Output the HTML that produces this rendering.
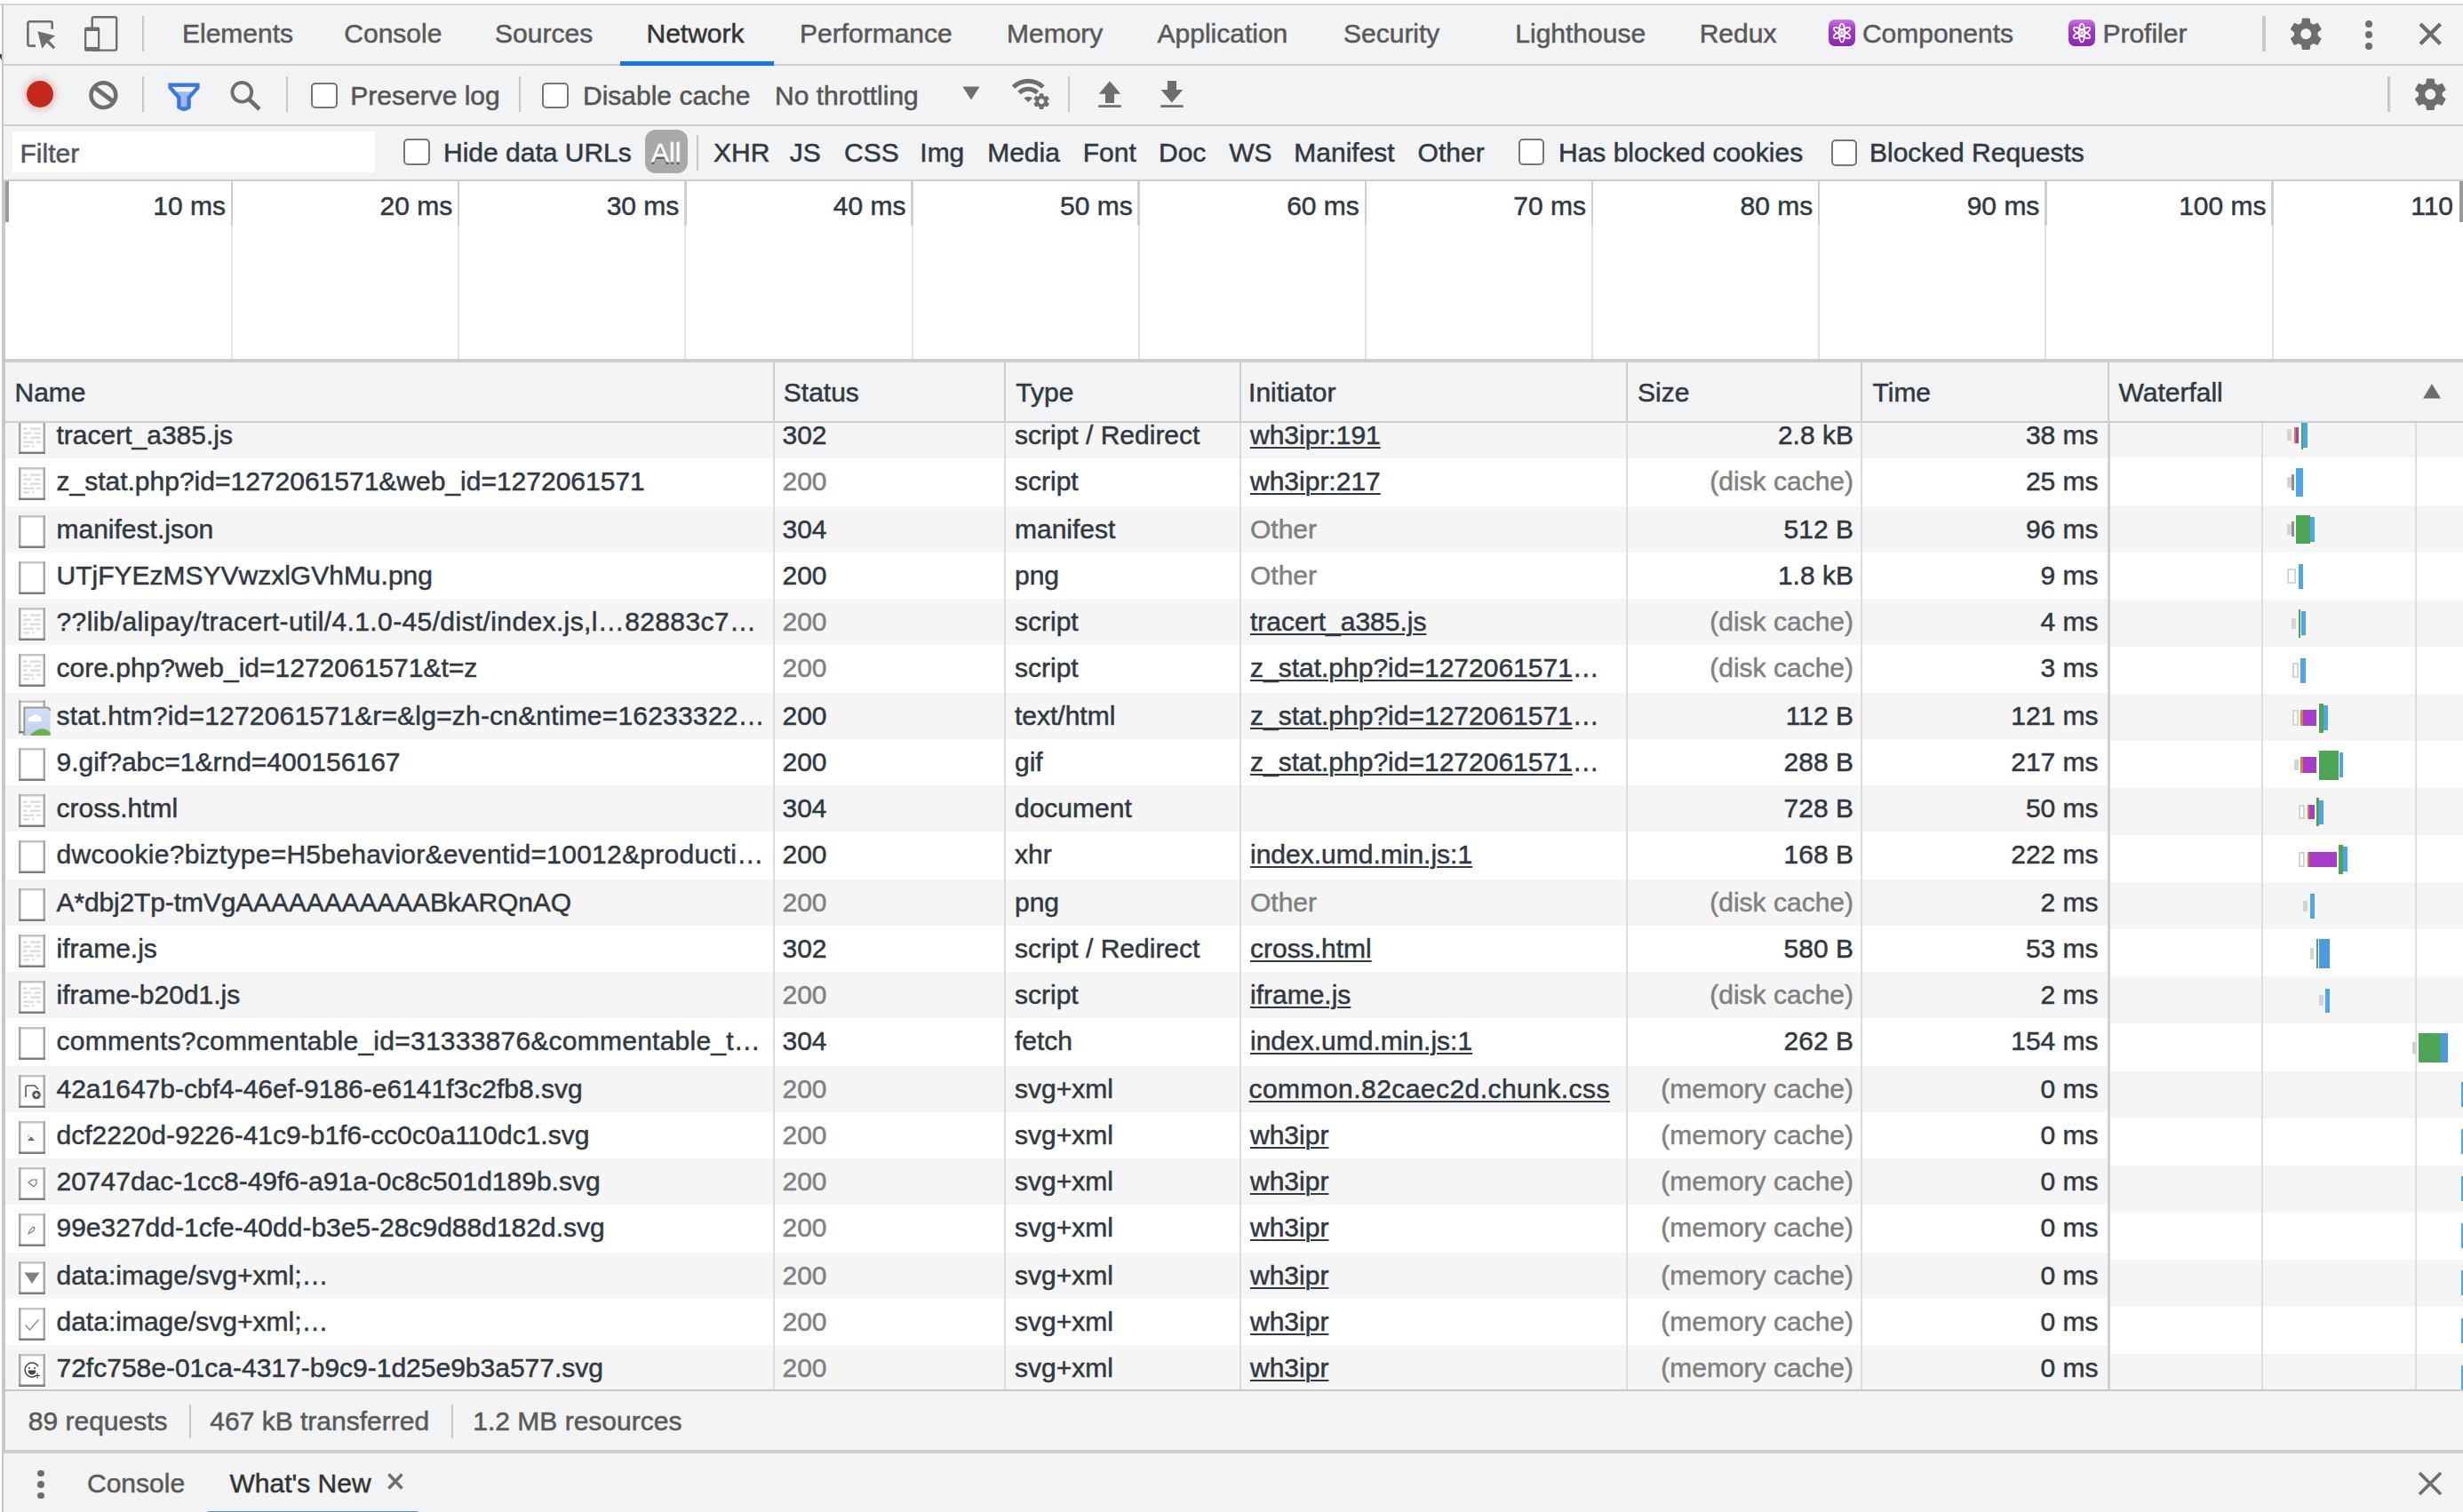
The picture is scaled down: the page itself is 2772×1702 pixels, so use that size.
<!DOCTYPE html>
<html><head><meta charset="utf-8"><style>
html,body{margin:0;padding:0;width:2772px;height:1702px;overflow:hidden;background:#fff;font-family:'Liberation Sans', sans-serif;-webkit-text-stroke:0.5px currentColor}
.t{position:absolute;line-height:40px;font-size:30px;white-space:pre;color:#303942}
div{box-sizing:content-box}
u{text-decoration:underline;text-decoration-thickness:2px;text-underline-offset:3px}
</style></head><body>
<div style="position:absolute;left:0;top:0;width:2772px;height:1702px;background:#fff"></div>
<div style="position:absolute;left:4px;top:6px;width:2768px;height:1696px;background:#f1f3f4;"></div>
<div style="position:absolute;left:0px;top:4px;width:2772px;height:2px;background:#d4d5d9;"></div>
<div style="position:absolute;left:2px;top:6px;width:1.9px;height:1696px;background:#c5c6cb;"></div>
<div style="position:absolute;left:4px;top:72px;width:2768px;height:1.5px;background:#cacdd1;"></div>
<svg style="position:absolute;left:28px;top:18px;" width="40" height="42" viewBox="0 0 40 42"><path d="M12 33.6 H5.4 a2 2 0 0 1 -2 -2 V8.3 a2 2 0 0 1 2 -2 H28.7 a2 2 0 0 1 2 2 V14.7" fill="none" stroke="#6e6e6e" stroke-width="2.6"/><path d="M14.4 17.3 L34.2 22.2 L27.1 27.4 L34.2 35.2 L32 37.2 L24.5 30 L19.3 36.8 Z" fill="#6e6e6e"/></svg>
<svg style="position:absolute;left:92px;top:16px;" width="44" height="44" viewBox="0 0 44 44"><rect x="11.7" y="3.3" width="27.5" height="37.3" rx="2" fill="none" stroke="#6e6e6e" stroke-width="2.4"/><rect x="3" y="14.5" width="17.3" height="27.3" rx="2.2" fill="#6e6e6e"/><rect x="5.3" y="19" width="12.7" height="17.9" fill="#f1f3f4"/></svg>
<div style="position:absolute;left:160px;top:18px;width:2px;height:40px;background:#c8c8c8;"></div>
<div style="position:absolute;left:205.0px;top:17.60px;line-height:40px;font-size:30px;color:#595959;white-space:pre;">Elements</div>
<div style="position:absolute;left:387.3px;top:17.60px;line-height:40px;font-size:30px;color:#595959;white-space:pre;">Console</div>
<div style="position:absolute;left:557.1px;top:17.60px;line-height:40px;font-size:30px;color:#595959;white-space:pre;">Sources</div>
<div style="position:absolute;left:727.5px;top:17.60px;line-height:40px;font-size:30px;color:#333333;white-space:pre;">Network</div>
<div style="position:absolute;left:900.0px;top:17.60px;line-height:40px;font-size:30px;color:#595959;white-space:pre;">Performance</div>
<div style="position:absolute;left:1133.0px;top:17.60px;line-height:40px;font-size:30px;color:#595959;white-space:pre;">Memory</div>
<div style="position:absolute;left:1302.5px;top:17.60px;line-height:40px;font-size:30px;color:#595959;white-space:pre;">Application</div>
<div style="position:absolute;left:1512.0px;top:17.60px;line-height:40px;font-size:30px;color:#595959;white-space:pre;">Security</div>
<div style="position:absolute;left:1705.3px;top:17.60px;line-height:40px;font-size:30px;color:#595959;white-space:pre;">Lighthouse</div>
<div style="position:absolute;left:1912.7px;top:17.60px;line-height:40px;font-size:30px;color:#595959;white-space:pre;">Redux</div>
<div style="position:absolute;left:2095.8999999999996px;top:17.60px;line-height:40px;font-size:30px;color:#595959;white-space:pre;">Components</div>
<div style="position:absolute;left:2366.3999999999996px;top:17.60px;line-height:40px;font-size:30px;color:#595959;white-space:pre;">Profiler</div>
<div style="position:absolute;left:698px;top:68.5px;width:173px;height:5px;background:#1a73e8;"></div>
<svg style="position:absolute;left:2058px;top:22px;" width="30" height="30" viewBox="0 0 30 30"><defs><linearGradient id="rg2058" x1="0" y1="0" x2="0" y2="1"><stop offset="0" stop-color="#c877e0"/><stop offset="0.35" stop-color="#a43bcc"/><stop offset="1" stop-color="#8c2aad"/></linearGradient></defs><rect x="0" y="0" width="30" height="30" rx="7" fill="url(#rg2058)"/><g fill="none" stroke="#fff" stroke-width="1.6"><ellipse cx="15" cy="15" rx="3.2" ry="10.5"/><ellipse cx="15" cy="15" rx="3.2" ry="10.5" transform="rotate(60 15 15)"/><ellipse cx="15" cy="15" rx="3.2" ry="10.5" transform="rotate(-60 15 15)"/></g><circle cx="15" cy="15" r="1.8" fill="#fff"/></svg>
<svg style="position:absolute;left:2328px;top:22px;" width="30" height="30" viewBox="0 0 30 30"><defs><linearGradient id="rg2328" x1="0" y1="0" x2="0" y2="1"><stop offset="0" stop-color="#c877e0"/><stop offset="0.35" stop-color="#a43bcc"/><stop offset="1" stop-color="#8c2aad"/></linearGradient></defs><rect x="0" y="0" width="30" height="30" rx="7" fill="url(#rg2328)"/><g fill="none" stroke="#fff" stroke-width="1.6"><ellipse cx="15" cy="15" rx="3.2" ry="10.5"/><ellipse cx="15" cy="15" rx="3.2" ry="10.5" transform="rotate(60 15 15)"/><ellipse cx="15" cy="15" rx="3.2" ry="10.5" transform="rotate(-60 15 15)"/></g><circle cx="15" cy="15" r="1.8" fill="#fff"/></svg>
<div style="position:absolute;left:2546px;top:18px;width:3.5px;height:40px;background:#c8c8c8;"></div>
<svg style="position:absolute;left:2572.71px;top:15.81px" width="44.58" height="44.58" viewBox="0 0 24 24"><path d="M19.14 12.94c.04-.3.06-.61.06-.94 0-.32-.02-.64-.07-.94l2.03-1.58c.18-.14.23-.41.12-.61l-1.92-3.32c-.12-.22-.37-.29-.59-.22l-2.39.96c-.5-.38-1.03-.7-1.62-.94L14.4 2.81c-.04-.24-.24-.41-.48-.41h-3.84c-.24 0-.43.17-.47.41L9.25 5.35c-.59.24-1.13.57-1.62.94l-2.39-.96c-.22-.08-.47 0-.59.22L2.74 8.87c-.12.21-.08.47.12.61l2.03 1.58c-.05.3-.09.63-.09.94s.02.64.07.94l-2.03 1.58c-.18.14-.23.41-.12.61l1.92 3.32c.12.22.37.29.59.22l2.39-.96c.5.38 1.03.7 1.62.94l.36 2.54c.05.24.24.41.48.41h3.84c.24 0 .44-.17.47-.41l.36-2.54c.59-.24 1.13-.56 1.62-.94l2.39.96c.22.08.47 0 .59-.22l1.92-3.32c.12-.22.07-.47-.12-.61l-2.01-1.58zM12 15.2c-1.77 0-3.2-1.43-3.2-3.2s1.43-3.2 3.2-3.2 3.2 1.43 3.2 3.2-1.43 3.2-3.2 3.2z" fill="#6e6e6e"/></svg>
<div style="position:absolute;left:2662px;top:23px;width:8px;height:8px;border-radius:50%;background:#6e6e6e"></div>
<div style="position:absolute;left:2662px;top:35.3px;width:8px;height:8px;border-radius:50%;background:#6e6e6e"></div>
<div style="position:absolute;left:2662px;top:47.8px;width:8px;height:8px;border-radius:50%;background:#6e6e6e"></div>
<svg style="position:absolute;left:2720px;top:23px;" width="30" height="30" viewBox="0 0 30 30"><path d="M4 4 L26.5 26.5 M26.5 4 L4 26.5" stroke="#6e6e6e" stroke-width="4.4"/></svg>
<div style="position:absolute;left:4px;top:140px;width:2768px;height:1.5px;background:#cacdd1;"></div>
<div style="position:absolute;left:30px;top:90.75px;width:30px;height:30px;border-radius:50%;background:#c5291c;box-shadow:0 0 6px 4px rgba(225,90,90,0.28)"></div>
<svg style="position:absolute;left:98px;top:89px;" width="38" height="38" viewBox="0 0 38 38"><circle cx="18.4" cy="18.1" r="13.9" fill="none" stroke="#6e6e6e" stroke-width="4.6"/><path d="M8.5 9.5 L28.3 24.5" stroke="#6e6e6e" stroke-width="5"/></svg>
<div style="position:absolute;left:160px;top:86px;width:2px;height:40px;background:#c8c8c8;"></div>
<svg style="position:absolute;left:186px;top:90px;" width="42" height="38" viewBox="0 0 42 38"><path d="M5.6 5.6 H36.4 V8.6 L26.6 19.8 V30.5 Q21 34.8 15.4 30.5 V19.8 L5.6 8.6 Z" fill="#9ebaee" stroke="#3b78e6" stroke-width="4.4" stroke-linejoin="miter"/><path d="M8 8 H34 L29.6 13.3 H12.4 Z" fill="#f1f3f4"/></svg>
<svg style="position:absolute;left:256px;top:87px;" width="42" height="42" viewBox="0 0 42 42"><circle cx="16.3" cy="16.7" r="10.9" fill="none" stroke="#6e6e6e" stroke-width="3.8"/><path d="M24.5 25 L36 36" stroke="#6e6e6e" stroke-width="4.5"/></svg>
<div style="position:absolute;left:322px;top:86px;width:2px;height:40px;background:#c8c8c8;"></div>
<div style="position:absolute;left:350px;top:92.5px;width:25.5px;height:25.5px;border:2px solid #767676;border-radius:5px;background:#fff"></div>
<div style="position:absolute;left:394.3px;top:87.60px;line-height:40px;font-size:30px;color:#555555;white-space:pre;">Preserve log</div>
<div style="position:absolute;left:584px;top:86px;width:2px;height:40px;background:#c8c8c8;"></div>
<div style="position:absolute;left:610px;top:92.5px;width:25.5px;height:25.5px;border:2px solid #767676;border-radius:5px;background:#fff"></div>
<div style="position:absolute;left:656px;top:87.60px;line-height:40px;font-size:30px;color:#555555;white-space:pre;">Disable cache</div>
<div style="position:absolute;left:872px;top:87.60px;line-height:40px;font-size:30px;color:#555555;white-space:pre;">No throttling</div>
<svg style="position:absolute;left:1080px;top:95px;" width="26" height="22" viewBox="0 0 26 22"><path d="M3.5 2.5 H22.5 L13 17.5 Z" fill="#6e6e6e"/></svg>
<svg style="position:absolute;left:1136px;top:86px;" width="50" height="40" viewBox="0 0 50 40"><path d="M21.2 28.6 L4 11.5 A24.3 24.3 0 0 1 38.4 11.5 Z" fill="none"/><path d="M4.5 12 A24 24 0 0 1 38 12" fill="none" stroke="#6e6e6e" stroke-width="5"/><path d="M11 18.5 A14.5 14.5 0 0 1 31.5 18.5" fill="none" stroke="#6e6e6e" stroke-width="5"/><path d="M16.5 24.5 A7 7 0 0 1 26 24.5 L21.2 29 Z" fill="#6e6e6e"/></svg>
<svg style="position:absolute;left:1161.46px;top:103.46px" width="22.29" height="22.29" viewBox="0 0 24 24"><path d="M19.14 12.94c.04-.3.06-.61.06-.94 0-.32-.02-.64-.07-.94l2.03-1.58c.18-.14.23-.41.12-.61l-1.92-3.32c-.12-.22-.37-.29-.59-.22l-2.39.96c-.5-.38-1.03-.7-1.62-.94L14.4 2.81c-.04-.24-.24-.41-.48-.41h-3.84c-.24 0-.43.17-.47.41L9.25 5.35c-.59.24-1.13.57-1.62.94l-2.39-.96c-.22-.08-.47 0-.59.22L2.74 8.87c-.12.21-.08.47.12.61l2.03 1.58c-.05.3-.09.63-.09.94s.02.64.07.94l-2.03 1.58c-.18.14-.23.41-.12.61l1.92 3.32c.12.22.37.29.59.22l2.39-.96c.5.38 1.03.7 1.62.94l.36 2.54c.05.24.24.41.48.41h3.84c.24 0 .44-.17.47-.41l.36-2.54c.59-.24 1.13-.56 1.62-.94l2.39.96c.22.08.47 0 .59-.22l1.92-3.32c.12-.22.07-.47-.12-.61l-2.01-1.58zM12 15.2c-1.77 0-3.2-1.43-3.2-3.2s1.43-3.2 3.2-3.2 3.2 1.43 3.2 3.2-1.43 3.2-3.2 3.2z" fill="#6e6e6e"/></svg>
<div style="position:absolute;left:1202px;top:86px;width:2px;height:40px;background:#c8c8c8;"></div>
<svg style="position:absolute;left:1234px;top:89px;" width="30" height="34" viewBox="0 0 30 34"><path d="M15 2.2 L27.3 16.8 H20 V26.9 H10 V16.8 H2.7 Z" fill="#6e6e6e"/><rect x="2.2" y="29.2" width="25.6" height="2.7" fill="#6e6e6e"/></svg>
<svg style="position:absolute;left:1304px;top:89px;" width="30" height="34" viewBox="0 0 30 34"><path d="M9.9 1.9 H20 V12 H27.3 L14.9 26.6 L2.6 12 H9.9 Z" fill="#6e6e6e"/><rect x="2.3" y="29.2" width="25.4" height="2.7" fill="#6e6e6e"/></svg>
<div style="position:absolute;left:2687px;top:86px;width:2.5px;height:40px;background:#c8c8c8;"></div>
<svg style="position:absolute;left:2712.91px;top:83.71px" width="44.58" height="44.58" viewBox="0 0 24 24"><path d="M19.14 12.94c.04-.3.06-.61.06-.94 0-.32-.02-.64-.07-.94l2.03-1.58c.18-.14.23-.41.12-.61l-1.92-3.32c-.12-.22-.37-.29-.59-.22l-2.39.96c-.5-.38-1.03-.7-1.62-.94L14.4 2.81c-.04-.24-.24-.41-.48-.41h-3.84c-.24 0-.43.17-.47.41L9.25 5.35c-.59.24-1.13.57-1.62.94l-2.39-.96c-.22-.08-.47 0-.59.22L2.74 8.87c-.12.21-.08.47.12.61l2.03 1.58c-.05.3-.09.63-.09.94s.02.64.07.94l-2.03 1.58c-.18.14-.23.41-.12.61l1.92 3.32c.12.22.37.29.59.22l2.39-.96c.5.38 1.03.7 1.62.94l.36 2.54c.05.24.24.41.48.41h3.84c.24 0 .44-.17.47-.41l.36-2.54c.59-.24 1.13-.56 1.62-.94l2.39.96c.22.08.47 0 .59-.22l1.92-3.32c.12-.22.07-.47-.12-.61l-2.01-1.58zM12 15.2c-1.77 0-3.2-1.43-3.2-3.2s1.43-3.2 3.2-3.2 3.2 1.43 3.2 3.2-1.43 3.2-3.2 3.2z" fill="#6e6e6e"/></svg>
<div style="position:absolute;left:4px;top:202px;width:2768px;height:2px;background:#cacdd1;"></div>
<div style="position:absolute;left:14px;top:148px;width:408px;height:45.5px;background:#fff;"></div>
<div style="position:absolute;left:22.5px;top:152.60px;line-height:40px;font-size:30px;color:#50565c;white-space:pre;">Filter</div>
<div style="position:absolute;left:454.2px;top:156.4px;width:25.5px;height:25.5px;border:2px solid #767676;border-radius:5px;background:#fff"></div>
<div style="position:absolute;left:499px;top:151.60px;line-height:40px;font-size:30px;color:#303942;white-space:pre;">Hide data URLs</div>
<div style="position:absolute;left:726.3px;top:146.1px;width:47.5px;height:49.4px;border-radius:12px;background:#a8a9a8"></div>
<div style="position:absolute;left:733px;top:151.60px;line-height:40px;font-size:30px;color:#fff;white-space:pre;text-shadow:0 3px 0.5px rgba(70,70,70,0.75)">All</div>
<div style="position:absolute;left:784px;top:152px;width:2px;height:40px;background:#c8c8c8;"></div>
<div style="position:absolute;left:803.0999999999999px;top:151.60px;line-height:40px;font-size:30px;color:#303942;white-space:pre;">XHR</div>
<div style="position:absolute;left:888.6999999999999px;top:151.60px;line-height:40px;font-size:30px;color:#303942;white-space:pre;">JS</div>
<div style="position:absolute;left:950.0px;top:151.60px;line-height:40px;font-size:30px;color:#303942;white-space:pre;">CSS</div>
<div style="position:absolute;left:1035.3px;top:151.60px;line-height:40px;font-size:30px;color:#303942;white-space:pre;">Img</div>
<div style="position:absolute;left:1111.2px;top:151.60px;line-height:40px;font-size:30px;color:#303942;white-space:pre;">Media</div>
<div style="position:absolute;left:1218.8px;top:151.60px;line-height:40px;font-size:30px;color:#303942;white-space:pre;">Font</div>
<div style="position:absolute;left:1304.0px;top:151.60px;line-height:40px;font-size:30px;color:#303942;white-space:pre;">Doc</div>
<div style="position:absolute;left:1383.2px;top:151.60px;line-height:40px;font-size:30px;color:#303942;white-space:pre;">WS</div>
<div style="position:absolute;left:1456.3px;top:151.60px;line-height:40px;font-size:30px;color:#303942;white-space:pre;">Manifest</div>
<div style="position:absolute;left:1595.6px;top:151.60px;line-height:40px;font-size:30px;color:#303942;white-space:pre;">Other</div>
<div style="position:absolute;left:1708.7px;top:156.3px;width:25.5px;height:25.5px;border:2px solid #767676;border-radius:5px;background:#fff"></div>
<div style="position:absolute;left:1754px;top:151.60px;line-height:40px;font-size:30px;color:#303942;white-space:pre;">Has blocked cookies</div>
<div style="position:absolute;left:2060.5px;top:157px;width:25.5px;height:25.5px;border:2px solid #767676;border-radius:5px;background:#fff"></div>
<div style="position:absolute;left:2104px;top:151.60px;line-height:40px;font-size:30px;color:#303942;white-space:pre;">Blocked Requests</div>
<div style="position:absolute;left:4px;top:204px;width:2768px;height:201px;background:#fff;"></div>
<div style="position:absolute;left:4px;top:404px;width:2768px;height:4px;background:#cacdd1;"></div>
<div style="position:absolute;left:260.0px;top:204px;width:2px;height:200px;background:#e3e3e3;"></div>
<div style="position:absolute;left:259.75px;top:204px;width:2.5px;height:50px;background:#cfcfcf;"></div>
<div style="position:absolute;right:2518.0px;top:211.60px;line-height:40px;font-size:30px;color:#303942;white-space:pre;">10 ms</div>
<div style="position:absolute;left:515.17px;top:204px;width:2px;height:200px;background:#e3e3e3;"></div>
<div style="position:absolute;left:514.92px;top:204px;width:2.5px;height:50px;background:#cfcfcf;"></div>
<div style="position:absolute;right:2262.83px;top:211.60px;line-height:40px;font-size:30px;color:#303942;white-space:pre;">20 ms</div>
<div style="position:absolute;left:770.3399999999999px;top:204px;width:2px;height:200px;background:#e3e3e3;"></div>
<div style="position:absolute;left:770.0899999999999px;top:204px;width:2.5px;height:50px;background:#cfcfcf;"></div>
<div style="position:absolute;right:2007.66px;top:211.60px;line-height:40px;font-size:30px;color:#303942;white-space:pre;">30 ms</div>
<div style="position:absolute;left:1025.51px;top:204px;width:2px;height:200px;background:#e3e3e3;"></div>
<div style="position:absolute;left:1025.26px;top:204px;width:2.5px;height:50px;background:#cfcfcf;"></div>
<div style="position:absolute;right:1752.49px;top:211.60px;line-height:40px;font-size:30px;color:#303942;white-space:pre;">40 ms</div>
<div style="position:absolute;left:1280.6799999999998px;top:204px;width:2px;height:200px;background:#e3e3e3;"></div>
<div style="position:absolute;left:1280.4299999999998px;top:204px;width:2.5px;height:50px;background:#cfcfcf;"></div>
<div style="position:absolute;right:1497.3200000000002px;top:211.60px;line-height:40px;font-size:30px;color:#303942;white-space:pre;">50 ms</div>
<div style="position:absolute;left:1535.85px;top:204px;width:2px;height:200px;background:#e3e3e3;"></div>
<div style="position:absolute;left:1535.6px;top:204px;width:2.5px;height:50px;background:#cfcfcf;"></div>
<div style="position:absolute;right:1242.15px;top:211.60px;line-height:40px;font-size:30px;color:#303942;white-space:pre;">60 ms</div>
<div style="position:absolute;left:1791.02px;top:204px;width:2px;height:200px;background:#e3e3e3;"></div>
<div style="position:absolute;left:1790.77px;top:204px;width:2.5px;height:50px;background:#cfcfcf;"></div>
<div style="position:absolute;right:986.98px;top:211.60px;line-height:40px;font-size:30px;color:#303942;white-space:pre;">70 ms</div>
<div style="position:absolute;left:2046.1899999999998px;top:204px;width:2px;height:200px;background:#e3e3e3;"></div>
<div style="position:absolute;left:2045.9399999999998px;top:204px;width:2.5px;height:50px;background:#cfcfcf;"></div>
<div style="position:absolute;right:731.8100000000002px;top:211.60px;line-height:40px;font-size:30px;color:#303942;white-space:pre;">80 ms</div>
<div style="position:absolute;left:2301.3599999999997px;top:204px;width:2px;height:200px;background:#e3e3e3;"></div>
<div style="position:absolute;left:2301.1099999999997px;top:204px;width:2.5px;height:50px;background:#cfcfcf;"></div>
<div style="position:absolute;right:476.6400000000003px;top:211.60px;line-height:40px;font-size:30px;color:#303942;white-space:pre;">90 ms</div>
<div style="position:absolute;left:2556.5299999999997px;top:204px;width:2px;height:200px;background:#e3e3e3;"></div>
<div style="position:absolute;left:2556.2799999999997px;top:204px;width:2.5px;height:50px;background:#cfcfcf;"></div>
<div style="position:absolute;right:221.47000000000025px;top:211.60px;line-height:40px;font-size:30px;color:#303942;white-space:pre;">100 ms</div>
<div style="position:absolute;right:11px;top:211.60px;line-height:40px;font-size:30px;color:#303942;white-space:pre;">110</div>
<div style="position:absolute;left:4px;top:204px;width:6px;height:46px;background:#9a9a9a;"></div>
<div style="position:absolute;left:2768.2px;top:204px;width:4px;height:46px;background:#9a9a9a;"></div>
<div style="position:absolute;left:3.8px;top:252px;width:2.2px;height:152px;background:#c5d3ea;"></div>
<div style="position:absolute;left:0px;top:61px;width:1.8px;height:7.5px;background:#333333;clip-path:polygon(0 0,100% 0,100% 100%,40% 60%,0 55%)"></div>
<div style="position:absolute;left:4px;top:408px;width:2768px;height:66px;background:#f1f3f4;"></div>
<div style="position:absolute;left:4px;top:474px;width:2768px;height:2px;background:#cacdd1;"></div>
<div style="position:absolute;left:870px;top:408px;width:2px;height:66px;background:#cacdd1;"></div>
<div style="position:absolute;left:1130px;top:408px;width:2px;height:66px;background:#cacdd1;"></div>
<div style="position:absolute;left:1394.5px;top:408px;width:2px;height:66px;background:#cacdd1;"></div>
<div style="position:absolute;left:1830px;top:408px;width:2px;height:66px;background:#cacdd1;"></div>
<div style="position:absolute;left:2094px;top:408px;width:2px;height:66px;background:#cacdd1;"></div>
<div style="position:absolute;left:2372px;top:408px;width:2px;height:66px;background:#cacdd1;"></div>
<div style="position:absolute;left:16.5px;top:421.61px;line-height:40px;font-size:30px;color:#303942;white-space:pre;">Name</div>
<div style="position:absolute;left:881.8px;top:421.61px;line-height:40px;font-size:30px;color:#303942;white-space:pre;">Status</div>
<div style="position:absolute;left:1143.3px;top:421.61px;line-height:40px;font-size:30px;color:#303942;white-space:pre;">Type</div>
<div style="position:absolute;left:1405.1px;top:421.61px;line-height:40px;font-size:30px;color:#303942;white-space:pre;">Initiator</div>
<div style="position:absolute;left:1843.0px;top:421.61px;line-height:40px;font-size:30px;color:#303942;white-space:pre;">Size</div>
<div style="position:absolute;left:2107.5px;top:421.61px;line-height:40px;font-size:30px;color:#303942;white-space:pre;">Time</div>
<div style="position:absolute;left:2384.5px;top:421.61px;line-height:40px;font-size:30px;color:#303942;white-space:pre;">Waterfall</div>
<svg style="position:absolute;left:2724px;top:429px;" width="26" height="22" viewBox="0 0 26 22"><path d="M3 19.5 H23 L13 3 Z" fill="#6e6e6e"/></svg>
<div style="position:absolute;left:0;top:476px;width:2772px;height:1088px;overflow:hidden;background:#fff">
<div style="position:absolute;left:0;top:-476px;width:2772px;height:1702px">
<div style="position:absolute;left:4px;top:464.00px;width:2369px;height:52px;background:#f5f5f5"></div>
<div style="position:absolute;left:4px;top:570.00px;width:2369px;height:52px;background:#f5f5f5"></div>
<div style="position:absolute;left:4px;top:674.00px;width:2369px;height:52px;background:#f5f5f5"></div>
<div style="position:absolute;left:4px;top:780.00px;width:2369px;height:52px;background:#f5f5f5"></div>
<div style="position:absolute;left:4px;top:884.00px;width:2369px;height:52px;background:#f5f5f5"></div>
<div style="position:absolute;left:4px;top:990.00px;width:2369px;height:52px;background:#f5f5f5"></div>
<div style="position:absolute;left:4px;top:1094.00px;width:2369px;height:52px;background:#f5f5f5"></div>
<div style="position:absolute;left:4px;top:1200.00px;width:2369px;height:52px;background:#f5f5f5"></div>
<div style="position:absolute;left:4px;top:1304.00px;width:2369px;height:52px;background:#f5f5f5"></div>
<div style="position:absolute;left:4px;top:1410.00px;width:2369px;height:52px;background:#f5f5f5"></div>
<div style="position:absolute;left:4px;top:1514.00px;width:2369px;height:52px;background:#f5f5f5"></div>
<div style="position:absolute;left:2373px;top:462.42px;width:400px;height:53.08px;background:#f5f5f5"></div>
<div style="position:absolute;left:2373px;top:568.58px;width:400px;height:53.08px;background:#f5f5f5"></div>
<div style="position:absolute;left:2373px;top:674.74px;width:400px;height:53.08px;background:#f5f5f5"></div>
<div style="position:absolute;left:2373px;top:780.90px;width:400px;height:53.08px;background:#f5f5f5"></div>
<div style="position:absolute;left:2373px;top:887.06px;width:400px;height:53.08px;background:#f5f5f5"></div>
<div style="position:absolute;left:2373px;top:993.22px;width:400px;height:53.08px;background:#f5f5f5"></div>
<div style="position:absolute;left:2373px;top:1099.38px;width:400px;height:53.08px;background:#f5f5f5"></div>
<div style="position:absolute;left:2373px;top:1205.54px;width:400px;height:53.08px;background:#f5f5f5"></div>
<div style="position:absolute;left:2373px;top:1311.70px;width:400px;height:53.08px;background:#f5f5f5"></div>
<div style="position:absolute;left:2373px;top:1417.86px;width:400px;height:53.08px;background:#f5f5f5"></div>
<div style="position:absolute;left:2373px;top:1524.02px;width:400px;height:53.08px;background:#f5f5f5"></div>
<svg style="position:absolute;left:21px;top:474.4px" width="30" height="37" viewBox="0 0 30 37"><rect x="0" y="0" width="30" height="37" fill="#fff"/><rect x="0" y="0" width="30" height="2.5" fill="#c4c4c4"/><rect x="0" y="0" width="2.5" height="37" fill="#a9a9a9"/><rect x="27.5" y="0" width="2.5" height="37" fill="#a9a9a9"/><rect x="0" y="34.5" width="30" height="2.5" fill="#7e7e7e"/><g fill="#dedede"><rect x="5.1" y="7.35" width="4.5" height="2.5"/><rect x="12.9" y="7.35" width="11.9" height="2.5"/><rect x="5.1" y="12.35" width="9.0" height="2.5"/><rect x="17.7" y="12.35" width="7.1" height="2.5"/><rect x="5.1" y="17.45" width="4.5" height="2.5"/><rect x="12.9" y="17.45" width="11.9" height="2.5"/><rect x="5.1" y="22.45" width="11.9" height="2.5"/><rect x="20" y="22.45" width="4.8" height="2.5"/><rect x="5.1" y="27.15" width="6.8" height="2.5"/><rect x="15.1" y="27.15" width="1.9" height="2.5"/></g></svg>
<div class="t" style="left:63.5px;top:470.41px;color:#303942;">tracert_a385.js</div>
<div class="t" style="left:880.5px;top:470.41px;color:#303942;">302</div>
<div class="t" style="left:1142px;top:470.41px;color:#303942;">script / Redirect</div>
<div class="t" style="left:1407px;top:470.41px;color:#303942;"><u>wh3ipr:191</u></div>
<div class="t" style="right:686px;top:470.41px;color:#303942;">2.8 kB</div>
<div class="t" style="right:410.4000000000001px;top:470.41px;color:#303942;">38 ms</div>
<svg style="position:absolute;left:21px;top:526.4px" width="30" height="37" viewBox="0 0 30 37"><rect x="0" y="0" width="30" height="37" fill="#fff"/><rect x="0" y="0" width="30" height="2.5" fill="#c4c4c4"/><rect x="0" y="0" width="2.5" height="37" fill="#a9a9a9"/><rect x="27.5" y="0" width="2.5" height="37" fill="#a9a9a9"/><rect x="0" y="34.5" width="30" height="2.5" fill="#7e7e7e"/><g fill="#dedede"><rect x="5.1" y="7.35" width="4.5" height="2.5"/><rect x="12.9" y="7.35" width="11.9" height="2.5"/><rect x="5.1" y="12.35" width="9.0" height="2.5"/><rect x="17.7" y="12.35" width="7.1" height="2.5"/><rect x="5.1" y="17.45" width="4.5" height="2.5"/><rect x="12.9" y="17.45" width="11.9" height="2.5"/><rect x="5.1" y="22.45" width="11.9" height="2.5"/><rect x="20" y="22.45" width="4.8" height="2.5"/><rect x="5.1" y="27.15" width="6.8" height="2.5"/><rect x="15.1" y="27.15" width="1.9" height="2.5"/></g></svg>
<div class="t" style="left:63.5px;top:522.40px;color:#303942;">z_stat.php?id=1272061571&amp;web_id=1272061571</div>
<div class="t" style="left:880.5px;top:522.40px;color:#808080;">200</div>
<div class="t" style="left:1142px;top:522.40px;color:#303942;">script</div>
<div class="t" style="left:1407px;top:522.40px;color:#303942;"><u>wh3ipr:217</u></div>
<div class="t" style="right:686px;top:522.40px;color:#808080;">(disk cache)</div>
<div class="t" style="right:410.4000000000001px;top:522.40px;color:#303942;">25 ms</div>
<svg style="position:absolute;left:21px;top:580.4px" width="30" height="37" viewBox="0 0 30 37"><rect x="0" y="0" width="30" height="37" fill="#fff"/><rect x="0" y="0" width="30" height="2.5" fill="#c4c4c4"/><rect x="0" y="0" width="2.5" height="37" fill="#a9a9a9"/><rect x="27.5" y="0" width="2.5" height="37" fill="#a9a9a9"/><rect x="0" y="34.5" width="30" height="2.5" fill="#7e7e7e"/></svg>
<div class="t" style="left:63.5px;top:576.40px;color:#303942;">manifest.json</div>
<div class="t" style="left:880.5px;top:576.40px;color:#303942;">304</div>
<div class="t" style="left:1142px;top:576.40px;color:#303942;">manifest</div>
<div class="t" style="left:1407px;top:576.40px;color:#808080;">Other</div>
<div class="t" style="right:686px;top:576.40px;color:#303942;">512 B</div>
<div class="t" style="right:410.4000000000001px;top:576.40px;color:#303942;">96 ms</div>
<svg style="position:absolute;left:21px;top:632.4px" width="30" height="37" viewBox="0 0 30 37"><rect x="0" y="0" width="30" height="37" fill="#fff"/><rect x="0" y="0" width="30" height="2.5" fill="#c4c4c4"/><rect x="0" y="0" width="2.5" height="37" fill="#a9a9a9"/><rect x="27.5" y="0" width="2.5" height="37" fill="#a9a9a9"/><rect x="0" y="34.5" width="30" height="2.5" fill="#7e7e7e"/></svg>
<div class="t" style="left:63.5px;top:628.40px;color:#303942;">UTjFYEzMSYVwzxlGVhMu.png</div>
<div class="t" style="left:880.5px;top:628.40px;color:#303942;">200</div>
<div class="t" style="left:1142px;top:628.40px;color:#303942;">png</div>
<div class="t" style="left:1407px;top:628.40px;color:#808080;">Other</div>
<div class="t" style="right:686px;top:628.40px;color:#303942;">1.8 kB</div>
<div class="t" style="right:410.4000000000001px;top:628.40px;color:#303942;">9 ms</div>
<svg style="position:absolute;left:21px;top:684.4px" width="30" height="37" viewBox="0 0 30 37"><rect x="0" y="0" width="30" height="37" fill="#fff"/><rect x="0" y="0" width="30" height="2.5" fill="#c4c4c4"/><rect x="0" y="0" width="2.5" height="37" fill="#a9a9a9"/><rect x="27.5" y="0" width="2.5" height="37" fill="#a9a9a9"/><rect x="0" y="34.5" width="30" height="2.5" fill="#7e7e7e"/><g fill="#dedede"><rect x="5.1" y="7.35" width="4.5" height="2.5"/><rect x="12.9" y="7.35" width="11.9" height="2.5"/><rect x="5.1" y="12.35" width="9.0" height="2.5"/><rect x="17.7" y="12.35" width="7.1" height="2.5"/><rect x="5.1" y="17.45" width="4.5" height="2.5"/><rect x="12.9" y="17.45" width="11.9" height="2.5"/><rect x="5.1" y="22.45" width="11.9" height="2.5"/><rect x="20" y="22.45" width="4.8" height="2.5"/><rect x="5.1" y="27.15" width="6.8" height="2.5"/><rect x="15.1" y="27.15" width="1.9" height="2.5"/></g></svg>
<div class="t" style="left:63.5px;top:680.40px;color:#303942;letter-spacing:0.38px">??lib/alipay/tracert-util/4.1.0-45/dist/index.js,l…82883c7…</div>
<div class="t" style="left:880.5px;top:680.40px;color:#808080;">200</div>
<div class="t" style="left:1142px;top:680.40px;color:#303942;">script</div>
<div class="t" style="left:1407px;top:680.40px;color:#303942;"><u>tracert_a385.js</u></div>
<div class="t" style="right:686px;top:680.40px;color:#808080;">(disk cache)</div>
<div class="t" style="right:410.4000000000001px;top:680.40px;color:#303942;">4 ms</div>
<svg style="position:absolute;left:21px;top:736.4px" width="30" height="37" viewBox="0 0 30 37"><rect x="0" y="0" width="30" height="37" fill="#fff"/><rect x="0" y="0" width="30" height="2.5" fill="#c4c4c4"/><rect x="0" y="0" width="2.5" height="37" fill="#a9a9a9"/><rect x="27.5" y="0" width="2.5" height="37" fill="#a9a9a9"/><rect x="0" y="34.5" width="30" height="2.5" fill="#7e7e7e"/><g fill="#dedede"><rect x="5.1" y="7.35" width="4.5" height="2.5"/><rect x="12.9" y="7.35" width="11.9" height="2.5"/><rect x="5.1" y="12.35" width="9.0" height="2.5"/><rect x="17.7" y="12.35" width="7.1" height="2.5"/><rect x="5.1" y="17.45" width="4.5" height="2.5"/><rect x="12.9" y="17.45" width="11.9" height="2.5"/><rect x="5.1" y="22.45" width="11.9" height="2.5"/><rect x="20" y="22.45" width="4.8" height="2.5"/><rect x="5.1" y="27.15" width="6.8" height="2.5"/><rect x="15.1" y="27.15" width="1.9" height="2.5"/></g></svg>
<div class="t" style="left:63.5px;top:732.40px;color:#303942;">core.php?web_id=1272061571&amp;t=z</div>
<div class="t" style="left:880.5px;top:732.40px;color:#808080;">200</div>
<div class="t" style="left:1142px;top:732.40px;color:#303942;">script</div>
<div class="t" style="left:1407px;top:732.40px;color:#303942;"><u>z_stat.php?id=1272061571</u>…</div>
<div class="t" style="right:686px;top:732.40px;color:#808080;">(disk cache)</div>
<div class="t" style="right:410.4000000000001px;top:732.40px;color:#303942;">3 ms</div>
<svg style="position:absolute;left:21px;top:786.0px" width="40" height="42" viewBox="0 -2.5 40 42"><rect x="0" y="0" width="30" height="37" fill="#fff"/><rect x="0" y="0" width="30" height="2.5" fill="#c4c4c4"/><rect x="0" y="0" width="2.5" height="37" fill="#a9a9a9"/><rect x="27.5" y="0" width="2.5" height="37" fill="#a9a9a9"/><rect x="0" y="34.5" width="30" height="2.5" fill="#7e7e7e"/><defs><linearGradient id="sky" x1="0" y1="0" x2="0" y2="1"><stop offset="0" stop-color="#d3e0f7"/><stop offset="1" stop-color="#c1cfee"/></linearGradient></defs><path d="M6.3 8.1 H32.6 L35.6 11 V39.6 H6.3 Z" fill="url(#sky)"/><path d="M6.3 39.6 V8.1 H33 L36 11" fill="none" stroke="#9a9a9a" stroke-width="2"/><path d="M10.2 23.8 Q11 18 15.5 17.5 Q19 14.5 22 17 Q25.5 17 25.7 23.8 Z" fill="#fff"/><path d="M12.6 39.6 Q25 26 35.6 36 V39.6 Z" fill="#6fae4e"/></svg>
<div class="t" style="left:63.5px;top:786.40px;color:#303942;letter-spacing:0.2px">stat.htm?id=1272061571&amp;r=&amp;lg=zh-cn&amp;ntime=16233322…</div>
<div class="t" style="left:880.5px;top:786.40px;color:#303942;">200</div>
<div class="t" style="left:1142px;top:786.40px;color:#303942;">text/html</div>
<div class="t" style="left:1407px;top:786.40px;color:#303942;"><u>z_stat.php?id=1272061571</u>…</div>
<div class="t" style="right:686px;top:786.40px;color:#303942;">112 B</div>
<div class="t" style="right:410.4000000000001px;top:786.40px;color:#303942;">121 ms</div>
<svg style="position:absolute;left:21px;top:842.4px" width="30" height="37" viewBox="0 0 30 37"><rect x="0" y="0" width="30" height="37" fill="#fff"/><rect x="0" y="0" width="30" height="2.5" fill="#c4c4c4"/><rect x="0" y="0" width="2.5" height="37" fill="#a9a9a9"/><rect x="27.5" y="0" width="2.5" height="37" fill="#a9a9a9"/><rect x="0" y="34.5" width="30" height="2.5" fill="#7e7e7e"/></svg>
<div class="t" style="left:63.5px;top:838.40px;color:#303942;">9.gif?abc=1&amp;rnd=400156167</div>
<div class="t" style="left:880.5px;top:838.40px;color:#303942;">200</div>
<div class="t" style="left:1142px;top:838.40px;color:#303942;">gif</div>
<div class="t" style="left:1407px;top:838.40px;color:#303942;"><u>z_stat.php?id=1272061571</u>…</div>
<div class="t" style="right:686px;top:838.40px;color:#303942;">288 B</div>
<div class="t" style="right:410.4000000000001px;top:838.40px;color:#303942;">217 ms</div>
<svg style="position:absolute;left:21px;top:894.4px" width="30" height="37" viewBox="0 0 30 37"><rect x="0" y="0" width="30" height="37" fill="#fff"/><rect x="0" y="0" width="30" height="2.5" fill="#c4c4c4"/><rect x="0" y="0" width="2.5" height="37" fill="#a9a9a9"/><rect x="27.5" y="0" width="2.5" height="37" fill="#a9a9a9"/><rect x="0" y="34.5" width="30" height="2.5" fill="#7e7e7e"/><g fill="#dedede"><rect x="5.1" y="7.35" width="4.5" height="2.5"/><rect x="12.9" y="7.35" width="11.9" height="2.5"/><rect x="5.1" y="12.35" width="9.0" height="2.5"/><rect x="17.7" y="12.35" width="7.1" height="2.5"/><rect x="5.1" y="17.45" width="4.5" height="2.5"/><rect x="12.9" y="17.45" width="11.9" height="2.5"/><rect x="5.1" y="22.45" width="11.9" height="2.5"/><rect x="20" y="22.45" width="4.8" height="2.5"/><rect x="5.1" y="27.15" width="6.8" height="2.5"/><rect x="15.1" y="27.15" width="1.9" height="2.5"/></g></svg>
<div class="t" style="left:63.5px;top:890.40px;color:#303942;">cross.html</div>
<div class="t" style="left:880.5px;top:890.40px;color:#303942;">304</div>
<div class="t" style="left:1142px;top:890.40px;color:#303942;">document</div>
<div class="t" style="right:686px;top:890.40px;color:#303942;">728 B</div>
<div class="t" style="right:410.4000000000001px;top:890.40px;color:#303942;">50 ms</div>
<svg style="position:absolute;left:21px;top:946.4px" width="30" height="37" viewBox="0 0 30 37"><rect x="0" y="0" width="30" height="37" fill="#fff"/><rect x="0" y="0" width="30" height="2.5" fill="#c4c4c4"/><rect x="0" y="0" width="2.5" height="37" fill="#a9a9a9"/><rect x="27.5" y="0" width="2.5" height="37" fill="#a9a9a9"/><rect x="0" y="34.5" width="30" height="2.5" fill="#7e7e7e"/></svg>
<div class="t" style="left:63.5px;top:942.40px;color:#303942;letter-spacing:0.27px">dwcookie?biztype=H5behavior&amp;eventid=10012&amp;producti…</div>
<div class="t" style="left:880.5px;top:942.40px;color:#303942;">200</div>
<div class="t" style="left:1142px;top:942.40px;color:#303942;">xhr</div>
<div class="t" style="left:1407px;top:942.40px;color:#303942;"><u>index.umd.min.js:1</u></div>
<div class="t" style="right:686px;top:942.40px;color:#303942;">168 B</div>
<div class="t" style="right:410.4000000000001px;top:942.40px;color:#303942;">222 ms</div>
<svg style="position:absolute;left:21px;top:1000.4px" width="30" height="37" viewBox="0 0 30 37"><rect x="0" y="0" width="30" height="37" fill="#fff"/><rect x="0" y="0" width="30" height="2.5" fill="#c4c4c4"/><rect x="0" y="0" width="2.5" height="37" fill="#a9a9a9"/><rect x="27.5" y="0" width="2.5" height="37" fill="#a9a9a9"/><rect x="0" y="34.5" width="30" height="2.5" fill="#7e7e7e"/></svg>
<div class="t" style="left:63.5px;top:996.40px;color:#303942;letter-spacing:-0.13px">A*dbj2Tp-tmVgAAAAAAAAAAABkARQnAQ</div>
<div class="t" style="left:880.5px;top:996.40px;color:#808080;">200</div>
<div class="t" style="left:1142px;top:996.40px;color:#303942;">png</div>
<div class="t" style="left:1407px;top:996.40px;color:#808080;">Other</div>
<div class="t" style="right:686px;top:996.40px;color:#808080;">(disk cache)</div>
<div class="t" style="right:410.4000000000001px;top:996.40px;color:#303942;">2 ms</div>
<svg style="position:absolute;left:21px;top:1052.4px" width="30" height="37" viewBox="0 0 30 37"><rect x="0" y="0" width="30" height="37" fill="#fff"/><rect x="0" y="0" width="30" height="2.5" fill="#c4c4c4"/><rect x="0" y="0" width="2.5" height="37" fill="#a9a9a9"/><rect x="27.5" y="0" width="2.5" height="37" fill="#a9a9a9"/><rect x="0" y="34.5" width="30" height="2.5" fill="#7e7e7e"/><g fill="#dedede"><rect x="5.1" y="7.35" width="4.5" height="2.5"/><rect x="12.9" y="7.35" width="11.9" height="2.5"/><rect x="5.1" y="12.35" width="9.0" height="2.5"/><rect x="17.7" y="12.35" width="7.1" height="2.5"/><rect x="5.1" y="17.45" width="4.5" height="2.5"/><rect x="12.9" y="17.45" width="11.9" height="2.5"/><rect x="5.1" y="22.45" width="11.9" height="2.5"/><rect x="20" y="22.45" width="4.8" height="2.5"/><rect x="5.1" y="27.15" width="6.8" height="2.5"/><rect x="15.1" y="27.15" width="1.9" height="2.5"/></g></svg>
<div class="t" style="left:63.5px;top:1048.40px;color:#303942;">iframe.js</div>
<div class="t" style="left:880.5px;top:1048.40px;color:#303942;">302</div>
<div class="t" style="left:1142px;top:1048.40px;color:#303942;">script / Redirect</div>
<div class="t" style="left:1407px;top:1048.40px;color:#303942;"><u>cross.html</u></div>
<div class="t" style="right:686px;top:1048.40px;color:#303942;">580 B</div>
<div class="t" style="right:410.4000000000001px;top:1048.40px;color:#303942;">53 ms</div>
<svg style="position:absolute;left:21px;top:1104.4px" width="30" height="37" viewBox="0 0 30 37"><rect x="0" y="0" width="30" height="37" fill="#fff"/><rect x="0" y="0" width="30" height="2.5" fill="#c4c4c4"/><rect x="0" y="0" width="2.5" height="37" fill="#a9a9a9"/><rect x="27.5" y="0" width="2.5" height="37" fill="#a9a9a9"/><rect x="0" y="34.5" width="30" height="2.5" fill="#7e7e7e"/><g fill="#dedede"><rect x="5.1" y="7.35" width="4.5" height="2.5"/><rect x="12.9" y="7.35" width="11.9" height="2.5"/><rect x="5.1" y="12.35" width="9.0" height="2.5"/><rect x="17.7" y="12.35" width="7.1" height="2.5"/><rect x="5.1" y="17.45" width="4.5" height="2.5"/><rect x="12.9" y="17.45" width="11.9" height="2.5"/><rect x="5.1" y="22.45" width="11.9" height="2.5"/><rect x="20" y="22.45" width="4.8" height="2.5"/><rect x="5.1" y="27.15" width="6.8" height="2.5"/><rect x="15.1" y="27.15" width="1.9" height="2.5"/></g></svg>
<div class="t" style="left:63.5px;top:1100.40px;color:#303942;">iframe-b20d1.js</div>
<div class="t" style="left:880.5px;top:1100.40px;color:#808080;">200</div>
<div class="t" style="left:1142px;top:1100.40px;color:#303942;">script</div>
<div class="t" style="left:1407px;top:1100.40px;color:#303942;"><u>iframe.js</u></div>
<div class="t" style="right:686px;top:1100.40px;color:#808080;">(disk cache)</div>
<div class="t" style="right:410.4000000000001px;top:1100.40px;color:#303942;">2 ms</div>
<svg style="position:absolute;left:21px;top:1156.4px" width="30" height="37" viewBox="0 0 30 37"><rect x="0" y="0" width="30" height="37" fill="#fff"/><rect x="0" y="0" width="30" height="2.5" fill="#c4c4c4"/><rect x="0" y="0" width="2.5" height="37" fill="#a9a9a9"/><rect x="27.5" y="0" width="2.5" height="37" fill="#a9a9a9"/><rect x="0" y="34.5" width="30" height="2.5" fill="#7e7e7e"/></svg>
<div class="t" style="left:63.5px;top:1152.40px;color:#303942;letter-spacing:0.24px">comments?commentable_id=31333876&amp;commentable_t…</div>
<div class="t" style="left:880.5px;top:1152.40px;color:#303942;">304</div>
<div class="t" style="left:1142px;top:1152.40px;color:#303942;">fetch</div>
<div class="t" style="left:1407px;top:1152.40px;color:#303942;"><u>index.umd.min.js:1</u></div>
<div class="t" style="right:686px;top:1152.40px;color:#303942;">262 B</div>
<div class="t" style="right:410.4000000000001px;top:1152.40px;color:#303942;">154 ms</div>
<svg style="position:absolute;left:21px;top:1210.4px" width="30" height="37" viewBox="0 0 30 37"><rect x="0" y="0" width="30" height="37" fill="#fff"/><rect x="0" y="0" width="30" height="2.5" fill="#c4c4c4"/><rect x="0" y="0" width="2.5" height="37" fill="#a9a9a9"/><rect x="27.5" y="0" width="2.5" height="37" fill="#a9a9a9"/><rect x="0" y="34.5" width="30" height="2.5" fill="#7e7e7e"/><path d="M8 25 V14 a2 2 0 0 1 2 -2 H18 l4 4" fill="none" stroke="#555" stroke-width="1.6"/><circle cx="20" cy="22.5" r="4.8" fill="#555"/><path d="M20 20 V25 M17.5 22.5 H22.5" stroke="#fff" stroke-width="1.4"/></svg>
<div class="t" style="left:63.5px;top:1206.40px;color:#303942;">42a1647b-cbf4-46ef-9186-e6141f3c2fb8.svg</div>
<div class="t" style="left:880.5px;top:1206.40px;color:#808080;">200</div>
<div class="t" style="left:1142px;top:1206.40px;color:#303942;">svg+xml</div>
<div class="t" style="left:1405.5px;top:1206.40px;color:#303942;letter-spacing:0.45px"><u>common.82caec2d.chunk.css</u></div>
<div class="t" style="right:686px;top:1206.40px;color:#808080;">(memory cache)</div>
<div class="t" style="right:410.4000000000001px;top:1206.40px;color:#303942;">0 ms</div>
<svg style="position:absolute;left:21px;top:1262.4px" width="30" height="37" viewBox="0 0 30 37"><rect x="0" y="0" width="30" height="37" fill="#fff"/><rect x="0" y="0" width="30" height="2.5" fill="#c4c4c4"/><rect x="0" y="0" width="2.5" height="37" fill="#a9a9a9"/><rect x="27.5" y="0" width="2.5" height="37" fill="#a9a9a9"/><rect x="0" y="34.5" width="30" height="2.5" fill="#7e7e7e"/><rect x="7" y="11" width="16" height="16" fill="#fafafa" stroke="#eee" stroke-width="0.6"/><path d="M10 22 L14 17.5 L18 22 Z" fill="#666"/><circle cx="11" cy="16.5" r="1" fill="#e8a33c"/></svg>
<div class="t" style="left:63.5px;top:1258.40px;color:#303942;">dcf2220d-9226-41c9-b1f6-cc0c0a110dc1.svg</div>
<div class="t" style="left:880.5px;top:1258.40px;color:#808080;">200</div>
<div class="t" style="left:1142px;top:1258.40px;color:#303942;">svg+xml</div>
<div class="t" style="left:1407px;top:1258.40px;color:#303942;"><u>wh3ipr</u></div>
<div class="t" style="right:686px;top:1258.40px;color:#808080;">(memory cache)</div>
<div class="t" style="right:410.4000000000001px;top:1258.40px;color:#303942;">0 ms</div>
<svg style="position:absolute;left:21px;top:1314.4px" width="30" height="37" viewBox="0 0 30 37"><rect x="0" y="0" width="30" height="37" fill="#fff"/><rect x="0" y="0" width="30" height="2.5" fill="#c4c4c4"/><rect x="0" y="0" width="2.5" height="37" fill="#a9a9a9"/><rect x="27.5" y="0" width="2.5" height="37" fill="#a9a9a9"/><rect x="0" y="34.5" width="30" height="2.5" fill="#7e7e7e"/><rect x="7" y="11" width="16" height="16" fill="#fafafa" stroke="#eee" stroke-width="0.6"/><path d="M11 17 l4 -3 h5 v4 l-3 4 z" fill="none" stroke="#777" stroke-width="1.2"/></svg>
<div class="t" style="left:63.5px;top:1310.40px;color:#303942;">20747dac-1cc8-49f6-a91a-0c8c501d189b.svg</div>
<div class="t" style="left:880.5px;top:1310.40px;color:#808080;">200</div>
<div class="t" style="left:1142px;top:1310.40px;color:#303942;">svg+xml</div>
<div class="t" style="left:1407px;top:1310.40px;color:#303942;"><u>wh3ipr</u></div>
<div class="t" style="right:686px;top:1310.40px;color:#808080;">(memory cache)</div>
<div class="t" style="right:410.4000000000001px;top:1310.40px;color:#303942;">0 ms</div>
<svg style="position:absolute;left:21px;top:1366.4px" width="30" height="37" viewBox="0 0 30 37"><rect x="0" y="0" width="30" height="37" fill="#fff"/><rect x="0" y="0" width="30" height="2.5" fill="#c4c4c4"/><rect x="0" y="0" width="2.5" height="37" fill="#a9a9a9"/><rect x="27.5" y="0" width="2.5" height="37" fill="#a9a9a9"/><rect x="0" y="34.5" width="30" height="2.5" fill="#7e7e7e"/><rect x="7" y="11" width="16" height="16" fill="#fafafa" stroke="#eee" stroke-width="0.6"/><path d="M11 23 q1 -5 6 -8 q2 2 -1 5 z" fill="none" stroke="#777" stroke-width="1.1"/></svg>
<div class="t" style="left:63.5px;top:1362.40px;color:#303942;">99e327dd-1cfe-40dd-b3e5-28c9d88d182d.svg</div>
<div class="t" style="left:880.5px;top:1362.40px;color:#808080;">200</div>
<div class="t" style="left:1142px;top:1362.40px;color:#303942;">svg+xml</div>
<div class="t" style="left:1407px;top:1362.40px;color:#303942;"><u>wh3ipr</u></div>
<div class="t" style="right:686px;top:1362.40px;color:#808080;">(memory cache)</div>
<div class="t" style="right:410.4000000000001px;top:1362.40px;color:#303942;">0 ms</div>
<svg style="position:absolute;left:21px;top:1420.4px" width="30" height="37" viewBox="0 0 30 37"><rect x="0" y="0" width="30" height="37" fill="#fff"/><rect x="0" y="0" width="30" height="2.5" fill="#c4c4c4"/><rect x="0" y="0" width="2.5" height="37" fill="#a9a9a9"/><rect x="27.5" y="0" width="2.5" height="37" fill="#a9a9a9"/><rect x="0" y="34.5" width="30" height="2.5" fill="#7e7e7e"/><path d="M6.5 12.5 H23.5 L15 25 Z" fill="#808080"/></svg>
<div class="t" style="left:63.5px;top:1416.40px;color:#303942;">data:image/svg+xml;…</div>
<div class="t" style="left:880.5px;top:1416.40px;color:#808080;">200</div>
<div class="t" style="left:1142px;top:1416.40px;color:#303942;">svg+xml</div>
<div class="t" style="left:1407px;top:1416.40px;color:#303942;"><u>wh3ipr</u></div>
<div class="t" style="right:686px;top:1416.40px;color:#808080;">(memory cache)</div>
<div class="t" style="right:410.4000000000001px;top:1416.40px;color:#303942;">0 ms</div>
<svg style="position:absolute;left:21px;top:1472.4px" width="30" height="37" viewBox="0 0 30 37"><rect x="0" y="0" width="30" height="37" fill="#fff"/><rect x="0" y="0" width="30" height="2.5" fill="#c4c4c4"/><rect x="0" y="0" width="2.5" height="37" fill="#a9a9a9"/><rect x="27.5" y="0" width="2.5" height="37" fill="#a9a9a9"/><rect x="0" y="34.5" width="30" height="2.5" fill="#7e7e7e"/><path d="M7.5 19.5 L12.5 25 L22.5 13.5" fill="none" stroke="#8a8a8a" stroke-width="1.3"/></svg>
<div class="t" style="left:63.5px;top:1468.40px;color:#303942;">data:image/svg+xml;…</div>
<div class="t" style="left:880.5px;top:1468.40px;color:#808080;">200</div>
<div class="t" style="left:1142px;top:1468.40px;color:#303942;">svg+xml</div>
<div class="t" style="left:1407px;top:1468.40px;color:#303942;"><u>wh3ipr</u></div>
<div class="t" style="right:686px;top:1468.40px;color:#808080;">(memory cache)</div>
<div class="t" style="right:410.4000000000001px;top:1468.40px;color:#303942;">0 ms</div>
<svg style="position:absolute;left:21px;top:1524.4px" width="30" height="37" viewBox="0 0 30 37"><rect x="0" y="0" width="30" height="37" fill="#fff"/><rect x="0" y="0" width="30" height="2.5" fill="#c4c4c4"/><rect x="0" y="0" width="2.5" height="37" fill="#a9a9a9"/><rect x="27.5" y="0" width="2.5" height="37" fill="#a9a9a9"/><rect x="0" y="34.5" width="30" height="2.5" fill="#7e7e7e"/><path d="M22 14 A8 8 0 1 0 19 25" fill="none" stroke="#444" stroke-width="1.5"/><circle cx="12" cy="16" r="1" fill="#444"/><circle cx="18" cy="16" r="1" fill="#444"/><path d="M10.5 18.5 H19.5 Q19 23.5 15 23.5 Q11 23.5 10.5 18.5 Z" fill="#444"/><path d="M21 21.5 V27.5 M18 24.5 H24" stroke="#444" stroke-width="1.2"/></svg>
<div class="t" style="left:63.5px;top:1520.40px;color:#303942;">72fc758e-01ca-4317-b9c9-1d25e9b3a577.svg</div>
<div class="t" style="left:880.5px;top:1520.40px;color:#808080;">200</div>
<div class="t" style="left:1142px;top:1520.40px;color:#303942;">svg+xml</div>
<div class="t" style="left:1407px;top:1520.40px;color:#303942;"><u>wh3ipr</u></div>
<div class="t" style="right:686px;top:1520.40px;color:#808080;">(memory cache)</div>
<div class="t" style="right:410.4000000000001px;top:1520.40px;color:#303942;">0 ms</div>
<div style="position:absolute;left:870px;top:475px;width:2px;height:1090px;background:#dcdcdc"></div>
<div style="position:absolute;left:1130px;top:475px;width:2px;height:1090px;background:#dcdcdc"></div>
<div style="position:absolute;left:1394.5px;top:475px;width:2px;height:1090px;background:#dcdcdc"></div>
<div style="position:absolute;left:1830px;top:475px;width:2px;height:1090px;background:#dcdcdc"></div>
<div style="position:absolute;left:2094px;top:475px;width:2px;height:1090px;background:#dcdcdc"></div>
<div style="position:absolute;left:2371.5px;top:475px;width:3px;height:1090px;background:#d0d1d4"></div>
<div style="position:absolute;left:2544.8px;top:475px;width:2px;height:1090px;background:#dedede"></div>
<div style="position:absolute;left:2717.8px;top:475px;width:2px;height:1090px;background:#dedede"></div>
<div style="position:absolute;left:2574.2px;top:483.3px;width:5.1px;height:12.4px;background:#d4d4d4"></div>
<div style="position:absolute;left:2581.5px;top:481.1px;width:2.9px;height:17.5px;background:#d8832b"></div>
<div style="position:absolute;left:2584.4px;top:481.1px;width:2.9px;height:17.5px;background:#a73ccb"></div>
<div style="position:absolute;left:2589.5px;top:476px;width:2.5px;height:29.9px;background:#4ea655"></div>
<div style="position:absolute;left:2592px;top:476px;width:5.1px;height:27.7px;background:#4ea6ea"></div>
<div style="position:absolute;left:2574.2px;top:536.7px;width:5.1px;height:11.9px;background:#d4d4d4"></div>
<div style="position:absolute;left:2579.3px;top:534.2px;width:2.9px;height:17.4px;background:#8f8f8f"></div>
<div style="position:absolute;left:2584.4px;top:526.5px;width:7.6px;height:32.2px;background:#4ea6ea"></div>
<div style="position:absolute;left:2574.2px;top:590.1px;width:5.1px;height:11.9px;background:#d4d4d4"></div>
<div style="position:absolute;left:2579.3px;top:587.2px;width:2.9px;height:17.3px;background:#8f8f8f"></div>
<div style="position:absolute;left:2584.4px;top:580px;width:15.3px;height:32.1px;background:#4ea655"></div>
<div style="position:absolute;left:2599.7px;top:582.1px;width:5.0px;height:27.5px;background:#4ea6ea"></div>
<div style="position:absolute;left:2574.2px;top:640.4px;width:6.2px;height:13.0px;border:2px solid #d4d4d4;background:#fff"></div>
<div style="position:absolute;left:2586.6px;top:635px;width:5.4px;height:27.5px;background:#4ea6ea"></div>
<div style="position:absolute;left:2579.3px;top:695.7px;width:5.1px;height:12.2px;background:#d4d4d4"></div>
<div style="position:absolute;left:2586.6px;top:685.5px;width:2.9px;height:32.5px;background:#4ea655"></div>
<div style="position:absolute;left:2589.5px;top:688.4px;width:5.1px;height:27.1px;background:#4ea6ea"></div>
<div style="position:absolute;left:2579.6px;top:746.1px;width:3.5px;height:13.4px;border:2px solid #d4d4d4;background:#fff"></div>
<div style="position:absolute;left:2589.2px;top:740.8px;width:5.6px;height:28.0px;background:#4ea6ea"></div>
<div style="position:absolute;left:2579.6px;top:799.3px;width:3.5px;height:13.5px;border:2px solid #d4d4d4;background:#fff"></div>
<div style="position:absolute;left:2589.2px;top:799.3px;width:2.6px;height:17.5px;background:#d8832b"></div>
<div style="position:absolute;left:2591.8px;top:799.3px;width:15.7px;height:17.5px;background:#a73ccb"></div>
<div style="position:absolute;left:2609.8px;top:791.5px;width:5.2px;height:33.2px;background:#4ea655"></div>
<div style="position:absolute;left:2615px;top:794.1px;width:4.8px;height:27.9px;background:#4ea6ea"></div>
<div style="position:absolute;left:2581.9px;top:855.2px;width:5.2px;height:11.4px;background:#d4d4d4"></div>
<div style="position:absolute;left:2589.2px;top:852px;width:2.6px;height:18.0px;background:#d8832b"></div>
<div style="position:absolute;left:2591.8px;top:852px;width:15.7px;height:18.0px;background:#a73ccb"></div>
<div style="position:absolute;left:2609.8px;top:844.7px;width:22.7px;height:32.9px;background:#4ea655"></div>
<div style="position:absolute;left:2632.5px;top:847.4px;width:4.7px;height:27.9px;background:#4ea6ea"></div>
<div style="position:absolute;left:2587.1px;top:905.5px;width:3.3px;height:12.9px;border:2px solid #d4d4d4;background:#fff"></div>
<div style="position:absolute;left:2597.1px;top:905.5px;width:2.2px;height:16.9px;background:#d8832b"></div>
<div style="position:absolute;left:2599.3px;top:905.5px;width:5.3px;height:16.9px;background:#a73ccb"></div>
<div style="position:absolute;left:2606.7px;top:898px;width:3.1px;height:32.3px;background:#4ea655"></div>
<div style="position:absolute;left:2609.8px;top:900.6px;width:5.2px;height:27.1px;background:#4ea6ea"></div>
<div style="position:absolute;left:2587.1px;top:958.6px;width:3.3px;height:13.1px;border:2px solid #d4d4d4;background:#fff"></div>
<div style="position:absolute;left:2597.1px;top:958.6px;width:2.2px;height:17.1px;background:#d8832b"></div>
<div style="position:absolute;left:2599.3px;top:958.6px;width:30.4px;height:17.1px;background:#a73ccb"></div>
<div style="position:absolute;left:2632px;top:950.9px;width:5.2px;height:32.7px;background:#4ea655"></div>
<div style="position:absolute;left:2637.2px;top:953.3px;width:4.7px;height:27.7px;background:#4ea6ea"></div>
<div style="position:absolute;left:2592.2px;top:1014.3px;width:4.8px;height:12.1px;background:#d4d4d4"></div>
<div style="position:absolute;left:2599.5px;top:1006.4px;width:5.2px;height:27.8px;background:#4ea6ea"></div>
<div style="position:absolute;left:2599.7px;top:1067.1px;width:4.6px;height:12.5px;background:#d4d4d4"></div>
<div style="position:absolute;left:2606.8px;top:1057px;width:2.7px;height:32.7px;background:#4ea655"></div>
<div style="position:absolute;left:2609.5px;top:1057px;width:12.9px;height:32.7px;background:#4a9be0"></div>
<div style="position:absolute;left:2609.9px;top:1120.3px;width:4.8px;height:12.1px;background:#d4d4d4"></div>
<div style="position:absolute;left:2616.8px;top:1112.5px;width:5.6px;height:27.5px;background:#4ea6ea"></div>
<div style="position:absolute;left:2715px;top:1173.4px;width:4.6px;height:12.5px;background:#cfcfcf"></div>
<div style="position:absolute;left:2722px;top:1163px;width:25.4px;height:32.6px;background:#4ea655"></div>
<div style="position:absolute;left:2747.4px;top:1163px;width:7.4px;height:32.6px;background:#4a9be0"></div>
<div style="position:absolute;left:2770px;top:1218.1px;width:3px;height:28px;background:#4ea6ea"></div>
<div style="position:absolute;left:2770px;top:1271.2px;width:3px;height:28px;background:#4ea6ea"></div>
<div style="position:absolute;left:2770px;top:1324.2px;width:3px;height:28px;background:#4ea6ea"></div>
<div style="position:absolute;left:2770px;top:1377.3px;width:3px;height:28px;background:#4ea6ea"></div>
<div style="position:absolute;left:2770px;top:1430.4px;width:3px;height:28px;background:#4ea6ea"></div>
<div style="position:absolute;left:2770px;top:1483.5px;width:3px;height:28px;background:#4ea6ea"></div>
<div style="position:absolute;left:2770px;top:1536.6px;width:3px;height:28px;background:#4ea6ea"></div>
</div></div>
<div style="position:absolute;left:4px;top:1564px;width:2768px;height:2px;background:#c9c9c9"></div>
<div style="position:absolute;left:4px;top:1566px;width:2768px;height:66px;background:#f1f3f4"></div>
<div style="position:absolute;left:4px;top:1632px;width:2768px;height:4px;background:#cbcdd1"></div>
<div style="position:absolute;left:4px;top:1636px;width:2768px;height:66px;background:#f1f3f4"></div>
<div style="position:absolute;left:2.3px;top:204px;width:3.5px;height:1428px;background:#c6c7ca"></div>
<div class="t" style="left:31.8px;top:1579.61px;color:#595959;">89 requests</div>
<div style="position:absolute;left:212.5px;top:1581px;width:2px;height:38px;background:#c8c8c8"></div>
<div class="t" style="left:236.3px;top:1579.61px;color:#595959;">467 kB transferred</div>
<div style="position:absolute;left:507.5px;top:1581px;width:2px;height:38px;background:#c8c8c8"></div>
<div class="t" style="left:532.3px;top:1579.61px;color:#595959;">1.2 MB resources</div>
<div style="position:absolute;left:42.4px;top:1654.9px;width:7.6px;height:7.6px;border-radius:50%;background:#6e6e6e"></div>
<div style="position:absolute;left:42.4px;top:1667.3px;width:7.6px;height:7.6px;border-radius:50%;background:#6e6e6e"></div>
<div style="position:absolute;left:42.4px;top:1679.9px;width:7.6px;height:7.6px;border-radius:50%;background:#6e6e6e"></div>
<div class="t" style="left:98px;top:1649.61px;color:#595959;">Console</div>
<div class="t" style="left:258.5px;top:1649.61px;color:#333333;">What&#39;s New</div>
<svg style="position:absolute;left:434px;top:1656px" width="22" height="24" viewBox="0 0 22 24"><path d="M3.5 3.5 L18.5 19.5 M18.5 3.5 L3.5 19.5" stroke="#6e6e6e" stroke-width="3.4"/></svg>
<div style="position:absolute;left:234.3px;top:1700.8px;width:235.5px;height:1.2px;background:#5b8fe6"></div>
<svg style="position:absolute;left:2720px;top:1655px" width="30" height="30" viewBox="0 0 30 30"><path d="M3 3 L27 27 M27 3 L3 27" stroke="#6e6e6e" stroke-width="3.6"/></svg>
</body></html>
